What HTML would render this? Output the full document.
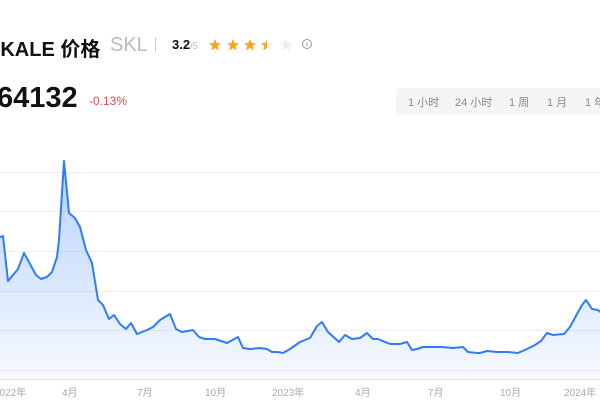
<!DOCTYPE html>
<html><head><meta charset="utf-8"><style>
body{margin:0;width:600px;height:420px;overflow:hidden;background:#fff;font-family:"Liberation Sans","Noto Sans CJK SC",sans-serif;position:relative}
.a{position:absolute;white-space:nowrap}
.t{font-size:11px;color:#888;top:94px}
.x{font-size:10px;color:#aaa;top:384px}
</style></head><body>
<div class="a" style="left:-13px;top:33px;font-size:20px;font-weight:bold;color:#111">SKALE 价格</div>
<div class="a" style="left:110px;top:34px;font-size:20px;color:#bbb">SKL</div>
<div class="a" style="left:155px;top:37px;width:1px;height:15px;background:#ccc"></div>
<div class="a" style="left:172px;top:37px;font-size:13px;font-weight:bold;color:#111">3.2<span style="font-size:9px;color:#bbb;font-weight:normal">/5</span></div>
<svg class="a" style="left:0;top:0" width="600" height="420">
<defs><path id="s" d="M0,-6 L1.8,-2 L6,-1.8 L2.8,1 L3.7,5.5 L0,3 L-3.7,5.5 L-2.8,1 L-6,-1.8 L-1.8,-2Z"/>
<clipPath id="h"><rect x="-7" y="-7" width="7" height="14"/></clipPath>
<linearGradient id="g" x1="0" y1="0" x2="0" y2="1"><stop offset="0" stop-color="#2f7cf6" stop-opacity=".35"/><stop offset="1" stop-color="#2f7cf6" stop-opacity=".04"/></linearGradient></defs>
<use href="#s" x="215" y="45" fill="#f7a823"/><use href="#s" x="233" y="45" fill="#f7a823"/><use href="#s" x="250" y="45" fill="#f7a823"/>
<g transform="translate(267,45)"><use href="#s" fill="#eee"/><g clip-path="url(#h)"><use href="#s" fill="#f7a823"/></g></g><use href="#s" x="286" y="45" fill="#eee"/>
<circle cx="307" cy="44" r="4.5" fill="none" stroke="#999" stroke-width="1"/><line x1="307" y1="42.5" x2="307" y2="46.5" stroke="#999"/>
<rect x="396" y="88" width="220" height="27" rx="3" fill="#f5f5f5"/>
<g stroke="#eee" stroke-width="1"><line x1="0" y1="172.5" x2="600" y2="172.5"/><line x1="0" y1="211.5" x2="600" y2="211.5"/><line x1="0" y1="251.5" x2="600" y2="251.5"/><line x1="0" y1="291.5" x2="600" y2="291.5"/><line x1="0" y1="330.5" x2="600" y2="330.5"/><line x1="0" y1="370.5" x2="600" y2="370.5"/><line x1="0" y1="379.5" x2="600" y2="379.5" stroke="#e4e4e4"/></g>
<path d="M0,237 L3,236 L8,281 L18,269 L24,253 L36,275 L41,279 L47,277 L52,272 L57,257 L59,240 L64,161 L69,213 L75,218 L80,227 L86,250 L92,263 L98,300 L103,305 L109,319 L114,315 L120,324 L126,329 L131,323 L137,334 L147,330 L153,327 L160,320 L170,314 L176,329 L182,332 L193,330 L199,337 L205,339 L215,339 L227,343 L238,337 L243,348 L250,349 L260,348 L267,349 L272,352 L278,352 L283,353 L290,349 L300,342 L310,338 L317,326 L322,322 L328,332 L339,342 L345,335 L352,339 L360,338 L367,333 L373,339 L378,339 L390,344 L400,344 L407,342 L412,350 L417,349 L423,347 L437,347 L442,347 L453,348 L463,347 L468,352 L477,353 L480,353 L487,351 L497,352 L503,352 L508,352 L518,353 L527,349 L535,345 L541,341 L547,333 L553,335 L564,334 L570,327 L577,314 L582,305 L586,300 L592,309 L598,310 L600,312 L600,379 L0,379Z" fill="url(#g)"/>
<path d="M0,237 L3,236 L8,281 L18,269 L24,253 L36,275 L41,279 L47,277 L52,272 L57,257 L59,240 L64,161 L69,213 L75,218 L80,227 L86,250 L92,263 L98,300 L103,305 L109,319 L114,315 L120,324 L126,329 L131,323 L137,334 L147,330 L153,327 L160,320 L170,314 L176,329 L182,332 L193,330 L199,337 L205,339 L215,339 L227,343 L238,337 L243,348 L250,349 L260,348 L267,349 L272,352 L278,352 L283,353 L290,349 L300,342 L310,338 L317,326 L322,322 L328,332 L339,342 L345,335 L352,339 L360,338 L367,333 L373,339 L378,339 L390,344 L400,344 L407,342 L412,350 L417,349 L423,347 L437,347 L442,347 L453,348 L463,347 L468,352 L477,353 L480,353 L487,351 L497,352 L503,352 L508,352 L518,353 L527,349 L535,345 L541,341 L547,333 L553,335 L564,334 L570,327 L577,314 L582,305 L586,300 L592,309 L598,310 L600,312" fill="none" stroke="#2f7cf6" stroke-width="2" stroke-linejoin="round"/>
</svg>
<div class="a" style="left:-3px;top:82px;font-size:29px;font-weight:bold;color:#111">64132</div>
<div class="a" style="left:89px;top:94px;font-size:12px;color:#e5484d">-0.13%</div>
<div class="a t" style="left:408px">1 小时</div>
<div class="a t" style="left:455px">24 小时</div>
<div class="a t" style="left:509px">1 周</div>
<div class="a t" style="left:547px">1 月</div>
<div class="a t" style="left:585px">1 年</div>
<div class="a x" style="left:-6px">2022年</div>
<div class="a x" style="left:62px">4月</div>
<div class="a x" style="left:137px">7月</div>
<div class="a x" style="left:205px">10月</div>
<div class="a x" style="left:272px">2023年</div>
<div class="a x" style="left:355px">4月</div>
<div class="a x" style="left:428px">7月</div>
<div class="a x" style="left:500px">10月</div>
<div class="a x" style="left:564px">2024年</div>
</body></html>
